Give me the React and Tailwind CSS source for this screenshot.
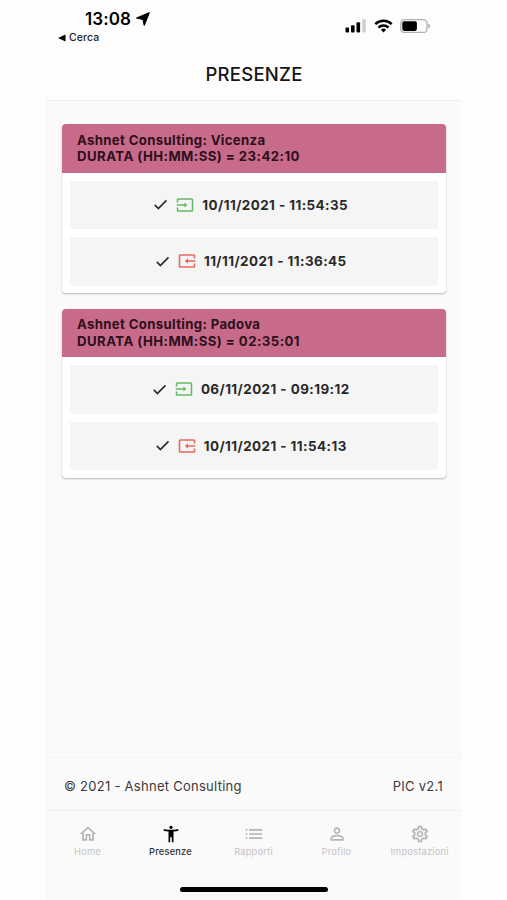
import React from "react";

const cards = [
  {
    place: "Ashnet Consulting: Vicenza",
    duration: "DURATA (HH:MM:SS) = 23:42:10",
    entries: [
      { kind: "in", text: "10/11/2021 - 11:54:35" },
      { kind: "out", text: "11/11/2021 - 11:36:45" },
    ],
  },
  {
    place: "Ashnet Consulting: Padova",
    duration: "DURATA (HH:MM:SS) = 02:35:01",
    entries: [
      { kind: "in", text: "06/11/2021 - 09:19:12" },
      { kind: "out", text: "10/11/2021 - 11:54:13" },
    ],
  },
];

function Check() {
  return (
    <svg viewBox="0 0 24 24" className="size-[17px] text-[#222]" fill="currentColor" stroke="currentColor" strokeWidth="0.4">
      <path d="M9 16.17 4.83 12l-1.42 1.41L9 19 21 7l-1.41-1.41z" />
    </svg>
  );
}

function EntryIcon({ kind }) {
  if (kind === "in") {
    return (
      <svg viewBox="0 0 18 16" className="ml-[7px] h-4 w-[18px]" fill="none" stroke="#63b963" strokeWidth="1.5">
        <path d="M1.5 5.4V2.8a.8.8 0 0 1 .8-.8h13.4a.8.8 0 0 1 .8.8v10.4a.8.8 0 0 1-.8.8H2.3a.8.8 0 0 1-.8-.8v-2.6" />
        <path d="M.8 8h8.5" />
        <path d="M8.4 5.4 11.4 8l-3 2.6z" fill="#63b963" stroke="none" />
      </svg>
    );
  }
  return (
    <svg viewBox="0 0 18 16" className="ml-[7px] h-4 w-[18px]" fill="none" stroke="#e96a5b" strokeWidth="1.6">
      <path d="M16.5 5.5V2.8a.8.8 0 0 0-.8-.8H2.3a.8.8 0 0 0-.8.8v10.4a.8.8 0 0 0 .8.8h13.4a.8.8 0 0 0 .8-.8v-2.7" />
      <path d="M17.3 8H9.5" />
      <path d="M10 5.3 6.8 8l3.2 2.7z" fill="#e96a5b" stroke="none" />
    </svg>
  );
}

function Card({ card }) {
  return (
    <section className="h-[169px] overflow-hidden rounded-[4px] bg-white shadow-[0_1px_2px_rgba(0,0,0,0.28)]">
      <header className="h-[48.5px] bg-[#c86b8a] pt-[7.5px] pl-[15.5px] text-[13.2px] leading-[16.5px] font-bold text-[#2d101b]">
        <p className="tracking-[0.34px]">{card.place}</p>
        <p className="tracking-[0.45px]">{card.duration}</p>
      </header>
      <div className="flex flex-col gap-[8px] px-[8px] pt-[8px]">
        {card.entries.map((e) => (
          <div key={e.text} className="flex h-[48.5px] items-center justify-center bg-[#f5f5f5] pr-[6.5px]">
            <Check />
            <EntryIcon kind={e.kind} />
            <span className="ml-2 text-[13.4px] font-bold tracking-[0.45px] text-[#292929]">{e.text}</span>
          </div>
        ))}
      </div>
    </section>
  );
}

const tabs = [
  { label: "Home", d: "m12 5.69 5 4.5V18h-2v-6H9v6H7v-7.81zM12 3 2 12h3v8h6v-6h2v6h6v-8h3z" },
  { label: "Presenze", active: true, d: "M20.5 6c-2.61.7-5.67 1-8.5 1s-5.89-.3-8.5-1L3 8c1.86.5 4 .83 6 1v13h2v-6h2v6h2V9c2-.17 4.14-.5 6-1zM12 6c1.1 0 2-.9 2-2s-.9-2-2-2-2 .9-2 2 .9 2 2 2" },
  { label: "Rapporti", d: "M2 6h2v2H2zm4 0h16v2H6zM2 11h2v2H2zm4 0h16v2H6zM2 16h2v2H2zm4 0h16v2H6z" },
  { label: "Profilo", d: "M12 5.9a2.1 2.1 0 1 1 0 4.2 2.1 2.1 0 0 1 0-4.2m0 9c2.97 0 6.1 1.46 6.1 2.1v1.1H5.9V17c0-.64 3.13-2.1 6.1-2.1M12 4C9.79 4 8 5.79 8 8s1.79 4 4 4 4-1.79 4-4-1.79-4-4-4m0 9c-2.67 0-8 1.34-8 4v3h16v-3c0-2.66-5.33-4-8-4" },
  { label: "Impostazioni", d: "M19.43 12.98c.04-.32.07-.64.07-.98s-.03-.66-.07-.98l2.11-1.65c.19-.15.24-.42.12-.64l-2-3.46c-.09-.16-.26-.25-.44-.25-.06 0-.12.01-.17.03l-2.49 1c-.52-.4-1.08-.73-1.69-.98l-.38-2.65C14.46 2.18 14.25 2 14 2h-4c-.25 0-.46.18-.49.42l-.38 2.65c-.61.25-1.17.59-1.69.98l-2.49-1c-.06-.02-.12-.03-.18-.03-.17 0-.34.09-.43.25l-2 3.46c-.13.22-.07.49.12.64l2.11 1.65c-.04.32-.07.65-.07.98s.03.66.07.98l-2.11 1.65c-.19.15-.24.42-.12.64l2 3.46c.09.16.26.25.44.25.06 0 .12-.01.17-.03l2.49-1c.52.4 1.08.73 1.69.98l.38 2.65c.03.24.24.42.49.42h4c.25 0 .46-.18.49-.42l.38-2.65c.61-.25 1.17-.59 1.69-.98l2.49 1c.06.02.12.03.18.03.17 0 .34-.09.43-.25l2-3.46c.12-.22.07-.49-.12-.64zm-1.98-1.71c.04.31.05.52.05.73s-.02.43-.05.73l-.14 1.13.89.7 1.08.84-.7 1.21-1.27-.51-1.04-.42-.9.68c-.43.32-.84.56-1.25.73l-1.06.43-.16 1.13-.2 1.35h-1.4l-.19-1.35-.16-1.13-1.06-.43c-.43-.18-.83-.41-1.23-.71l-.91-.7-1.06.43-1.27.51-.7-1.21 1.08-.84.89-.7-.14-1.13c-.03-.31-.05-.54-.05-.74s.02-.43.05-.73l.14-1.13-.89-.7-1.08-.84.7-1.21 1.27.51 1.04.42.9-.68c.43-.32.84-.56 1.25-.73l1.06-.43.16-1.13.2-1.35h1.39l.19 1.35.16 1.13 1.06.43c.43.18.83.41 1.23.71l.91.7 1.06-.43 1.27-.51.7 1.21-1.07.85-.89.7zM12 8c-2.21 0-4 1.79-4 4s1.79 4 4 4 4-1.79 4-4-1.79-4-4-4m0 6c-1.1 0-2-.9-2-2s.9-2 2-2 2 .9 2 2-.9 2-2 2" },
];

function StatusBar() {
  return (
    <div className="flex h-[46px] justify-between">
      <div>
        <div className="flex h-[29px] items-center gap-[5px] pt-[9px] pl-[39px]">
          <span className="text-[17px] leading-5 font-semibold tracking-[0.1px] text-black">13:08</span>
          <svg viewBox="0 0 14 14" className="size-[14px]">
            <path d="M13.2.8 8.2 13.2 7 7.3.6 6z" fill="#000" stroke="#000" strokeWidth="1.2" strokeLinejoin="round" />
          </svg>
        </div>
        <div className="flex h-[17px] items-center gap-[3px] pt-px pl-[12px]">
          <svg viewBox="0 0 8 8" className="size-[8px]">
            <path d="M0 4 7.5.5v7z" />
          </svg>
          <span className="text-[10.5px] leading-4 font-medium tracking-[0.1px] text-[#222]">Cerca</span>
        </div>
      </div>
      <div className="mt-[18.5px] flex h-[14px] gap-[7px] pr-[30px]">
        <svg viewBox="0 0 22 14" className="h-[14px] w-[22px]">
          <rect x="0.5" y="8.5" width="3.6" height="5" rx="1" />
          <rect x="6" y="6.2" width="3.6" height="7.3" rx="1" />
          <rect x="11.5" y="3.2" width="3.6" height="10.3" rx="1" />
          <rect x="17.2" y="0.3" width="3.6" height="13.2" rx="1" fill="#d0d0d0" />
        </svg>
        <svg viewBox="0 0 19 14" className="h-[14px] w-[19px]" fill="none" stroke="#000" strokeWidth="2.4">
          <path d="M1.3 5.1a11.7 11.7 0 0 1 16.4 0" />
          <path d="M4.5 8.6a7.1 7.1 0 0 1 10 0" />
          <path d="M6.9 10.7a3.8 3.8 0 0 1 5.2 0L9.5 13.4z" fill="#000" stroke="none" />
        </svg>
        <svg viewBox="0 0 31 14" className="h-[14px] w-[31px]">
          <rect x="0.8" y="0.6" width="26.2" height="12.9" rx="3.6" fill="none" stroke="#b0b0b0" strokeWidth="1.3" />
          <rect x="2.3" y="2.2" width="14.6" height="9.7" rx="1.8" />
          <path d="M28.4 4.8c2.2.7 2.2 3.8 0 4.5z" fill="#a9a9a9" />
        </svg>
      </div>
    </div>
  );
}

export default function App() {
  return (
    <div className="flex h-[900px] w-[507px] justify-center bg-[#fdfdfd] font-['Inter',sans-serif]">
      <div className="flex w-[415px] flex-col bg-[#fafafa]">
        <div className="h-[101px] border-b border-[#eeeeee] bg-[#fdfdfd]">
          <StatusBar />
          <h1 className="pt-px pl-px text-center text-[18.5px] leading-[54px] font-medium tracking-[0.25px] text-[#151515]">PRESENZE</h1>
        </div>
        <main className="flex flex-1 flex-col gap-[15.5px] px-[15.5px] pt-[23px]">
          {cards.map((c) => (
            <Card key={c.place} card={c} />
          ))}
        </main>
        <footer className="flex h-[53px] items-center justify-between border-t border-[#f3f3f3] px-[18px] pt-[5px] text-[13px] tracking-[0.27px] text-[#3a3a3a]">
          <span>© 2021 - Ashnet Consulting</span>
          <span>PIC v2.1</span>
        </footer>
        <nav className="flex h-[90px] flex-col items-center border-t border-[#f1f1f1]">
          <div className="grid h-[76px] w-full grid-cols-5 pt-[13px]">
            {tabs.map((t) => (
              <div key={t.label} className={"flex flex-col items-center " + (t.active ? "text-black" : "text-[#b5b5b5]")}>
                <svg viewBox="0 0 24 24" className="size-[20px]" fill="currentColor">
                  <path d={t.d} />
                </svg>
                <span className={"text-[9.3px] leading-[15px] tracking-[0.2px] " + (t.active ? "font-medium text-[#333]" : "text-[#c4c4c4]")}>{t.label}</span>
              </div>
            ))}
          </div>
          <div className="h-[5px] w-[148px] rounded-full bg-black" />
        </nav>
      </div>
    </div>
  );
}
